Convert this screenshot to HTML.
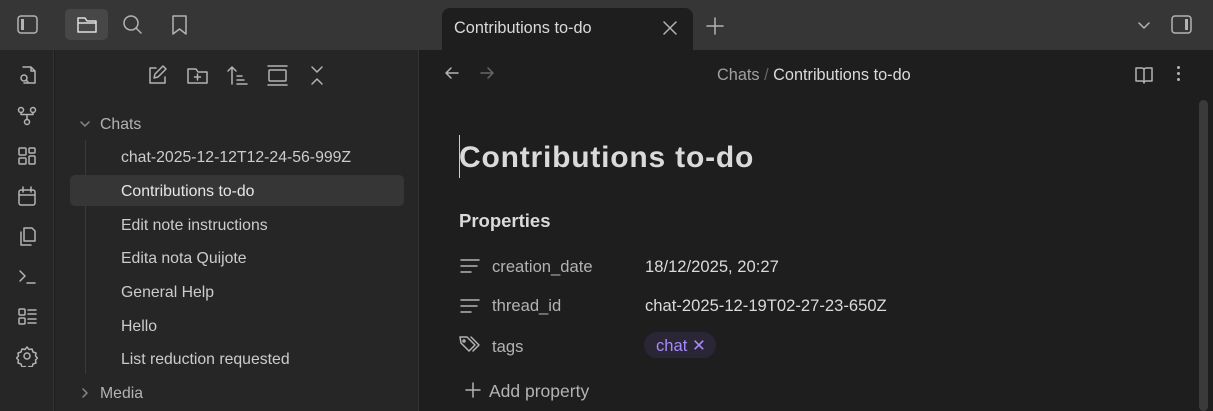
<!DOCTYPE html>
<html><head><meta charset="utf-8"><style>
*{margin:0;padding:0;box-sizing:border-box}
body{width:1213px;height:411px;overflow:hidden;background:#1e1e1e;font-family:"Liberation Sans",sans-serif;color:#dadada;position:relative}
.abs{position:absolute}
svg{position:absolute;fill:none;stroke:#b3b3b3;stroke-width:1.5;stroke-linecap:round;stroke-linejoin:round}
.t{position:absolute;font-size:15.8px;white-space:nowrap}
</style></head><body>
<div class="abs" style="left:0;top:0;width:1213px;height:50px;background:#363636"></div>
<div class="abs" style="left:0;top:50px;width:54px;height:361px;background:#262626;border-right:1px solid #333"></div>
<div class="abs" style="left:55px;top:50px;width:364px;height:361px;background:#262626;border-right:1px solid #333"></div>
<div class="abs" style="left:65px;top:9px;width:43px;height:31px;background:#474747;border-radius:5px"></div>
<div class="abs" style="left:442px;top:8px;width:251px;height:43px;background:#1e1e1e;border-radius:8px 8px 0 0"></div>
<svg style="left:16px;top:13px" width="24" height="24"><rect x="2" y="3" width="19" height="17" rx="3"/><rect x="5" y="6" width="3" height="11" fill="#b3b3b3" stroke="none"/></svg>
<svg style="left:75px;top:13px" width="24" height="24"><path d="M3 6v13h18V8h-9l-2-3H3z M3 10h18" stroke="#ddd"/></svg>
<svg style="left:121px;top:13px" width="24" height="24"><circle cx="10" cy="10" r="7"/><path d="M15 15l5 5"/></svg>
<svg style="left:168px;top:13px" width="24" height="24"><path d="M5 3h13v18l-6.5-5L5 21z"/></svg>
<div class="t" style="left:454px;top:19px;color:#dadada;font-size:16.3px">Contributions to-do</div>
<svg style="left:663px;top:21px" width="14" height="14"><path d="M1 1l12 12M13 1L1 13"/></svg>
<svg style="left:705px;top:16px" width="20" height="20"><path d="M10 2v16M2 10h16"/></svg>
<svg style="left:1136px;top:18px" width="16" height="16"><path d="M3 5l5 5 5-5"/></svg>
<svg style="left:1170px;top:13px" width="24" height="24"><rect x="2" y="3" width="19" height="17" rx="3"/><rect x="15" y="6" width="3" height="11" fill="#b3b3b3" stroke="none"/></svg>
<svg style="left:16px;top:64px" width="22" height="22"><path d="M7 3h8l4 4v12H8 M15 3v4h4"/><circle cx="8" cy="14" r="3"/><path d="M10 16l2 2"/></svg>
<svg style="left:16px;top:105px" width="22" height="22"><circle cx="5" cy="5" r="2.5"/><circle cx="17" cy="5" r="2.5"/><circle cx="11" cy="17" r="2.5"/><path d="M5 7.5v2h12v-2M11 9.5v5"/></svg>
<svg style="left:16px;top:145px" width="22" height="22"><rect x="3" y="3" width="7" height="7" rx="1"/><rect x="13" y="3" width="6" height="5" rx="1"/><rect x="3" y="13" width="7" height="6" rx="1"/><rect x="13" y="11" width="6" height="8" rx="1"/></svg>
<svg style="left:16px;top:185px" width="22" height="22"><rect x="3" y="5" width="16" height="15" rx="2"/><path d="M3 10h16M7 2v5M15 2v5"/></svg>
<svg style="left:16px;top:225px" width="22" height="22"><path d="M8 3h8l3 3v10H8z M5 7v13h10"/></svg>
<svg style="left:16px;top:265px" width="22" height="22"><path d="M4 6l5 5-5 5M11 18h8"/></svg>
<svg style="left:16px;top:305px" width="22" height="22"><rect x="3" y="4" width="6" height="6" rx="1"/><rect x="3" y="13" width="6" height="6" rx="1"/><path d="M12 5h8M12 9h8M12 14h8M12 18h8"/></svg>
<svg style="left:16px;top:345px" width="22" height="22"><circle cx="11" cy="11" r="3"/><path d="M11 2l2 2.5 3-.5 1 3 3 1-.5 3 2 2-2 2 .5 3-3 1-1 3-3-.5-2 2.5-2-2.5-3 .5-1-3-3-1 .5-3-2-2 2-2-.5-3 3-1 1-3 3 .5z"/></svg>
<svg style="left:146px;top:64px" width="22" height="22"><path d="M10 4H4v15h15v-6 M8 14l1-4 8-8 3 3-8 8z"/></svg>
<svg style="left:186px;top:64px" width="22" height="22"><path d="M2 5v14h19V8h-9l-2-3H2z M11.5 10v6M8.5 13h6"/></svg>
<svg style="left:226px;top:64px" width="22" height="22"><path d="M6 20V3M2 7l4-4 4 4M11 12h5M11 16h7M11 20h10"/></svg>
<svg style="left:266px;top:64px" width="22" height="22"><path d="M2 2h19M2 21h19"/><rect x="3" y="6" width="17" height="11" rx="1"/></svg>
<svg style="left:306px;top:64px" width="22" height="22"><path d="M6 3l5 5 5-5M6 20l5-5 5 5"/></svg>
<svg style="left:79px;top:118px" width="12" height="12"><path d="M2 4l4 4 4-4" stroke="#888"/></svg>
<div class="t" style="left:100px;top:116px;color:#b3b3b3">Chats</div>
<div class="abs" style="left:85px;top:140px;width:1px;height:234px;background:#3a3a3a"></div>
<div class="abs" style="left:70px;top:175px;width:334px;height:31px;background:#363636;border-radius:5px"></div>
<div class="t" style="left:121px;top:149px;color:#ccc">chat-2025-12-12T12-24-56-999Z</div>
<div class="t" style="left:121px;top:183px;color:#e6e6e6">Contributions to-do</div>
<div class="t" style="left:121px;top:217px;color:#ccc">Edit note instructions</div>
<div class="t" style="left:121px;top:250px;color:#ccc">Edita nota Quijote</div>
<div class="t" style="left:121px;top:284px;color:#ccc">General Help</div>
<div class="t" style="left:121px;top:318px;color:#ccc">Hello</div>
<div class="t" style="left:121px;top:351px;color:#ccc">List reduction requested</div>
<svg style="left:79px;top:387px" width="12" height="12"><path d="M4 2l4 4-4 4" stroke="#888"/></svg>
<div class="t" style="left:100px;top:385px;color:#b3b3b3">Media</div>
<svg style="left:443px;top:64px" width="18" height="18"><path d="M15 9H3M8 4L3 9l5 5"/></svg>
<svg style="left:478px;top:64px" width="18" height="18"><path d="M3 9h12M10 4l5 5-5 5" stroke="#666"/></svg>
<div class="t" style="left:717px;top:66px;color:#a0a0a0;font-size:16.3px">Chats <span style="color:#666">/</span> <span style="color:#dadada">Contributions to-do</span></div>
<svg style="left:1133px;top:64px" width="22" height="22"><path d="M3 4h6a2 2 0 0 1 2 2v13a2 2 0 0 0-2-2H3z M19 4h-6a2 2 0 0 0-2 2v13a2 2 0 0 1 2-2h6z"/></svg>
<div class="abs" style="left:1177px;top:66px;width:3px;height:3px;background:#b3b3b3;border-radius:50%;box-shadow:0 6px 0 #b3b3b3,0 12px 0 #b3b3b3"></div>
<div class="abs" style="left:1199px;top:100px;width:9px;height:311px;background:#3a3a3a;border-radius:5px"></div>
<div class="abs" style="left:459px;top:135px;width:1px;height:43px;background:#ccc"></div>
<div class="t" style="left:459px;top:141px;font-size:30px;font-weight:bold;color:#dadada;letter-spacing:0.8px">Contributions to-do</div>
<div class="t" style="left:459px;top:210px;font-size:18.5px;font-weight:bold;color:#dadada">Properties</div>
<svg style="left:460px;top:257px" width="20" height="18"><path d="M1 3h18M1 9h16M1 15h10"/></svg>
<div class="t" style="left:492px;top:257px;color:#b3b3b3;font-size:16.6px">creation_date</div>
<div class="t" style="left:645px;top:257px;color:#dadada;font-size:16.6px">18/12/2025, 20:27</div>
<svg style="left:460px;top:297px" width="20" height="18"><path d="M1 3h18M1 9h16M1 15h10"/></svg>
<div class="t" style="left:492px;top:296px;color:#b3b3b3;font-size:16.6px">thread_id</div>
<div class="t" style="left:645px;top:296px;color:#dadada;font-size:16.6px">chat-2025-12-19T02-27-23-650Z</div>
<svg style="left:459px;top:335px" width="22" height="20"><path d="M1 2h7l8 8-6 6-8-8z M12 2l8 8-6 6"/><circle cx="5" cy="6" r="1"/></svg>
<div class="t" style="left:492px;top:337px;color:#b3b3b3;font-size:16.6px">tags</div>
<div class="abs" style="left:644px;top:332px;width:72px;height:26px;background:#2a2636;border-radius:13px"></div>
<div class="t" style="left:656px;top:336px;color:#a68af9;font-size:16.6px">chat ✕</div>
<svg style="left:464px;top:381px" width="18" height="18"><path d="M9 2v14M2 9h14"/></svg>
<div class="t" style="left:489px;top:381px;color:#b3b3b3;font-size:17.5px">Add property</div>
</body></html>
